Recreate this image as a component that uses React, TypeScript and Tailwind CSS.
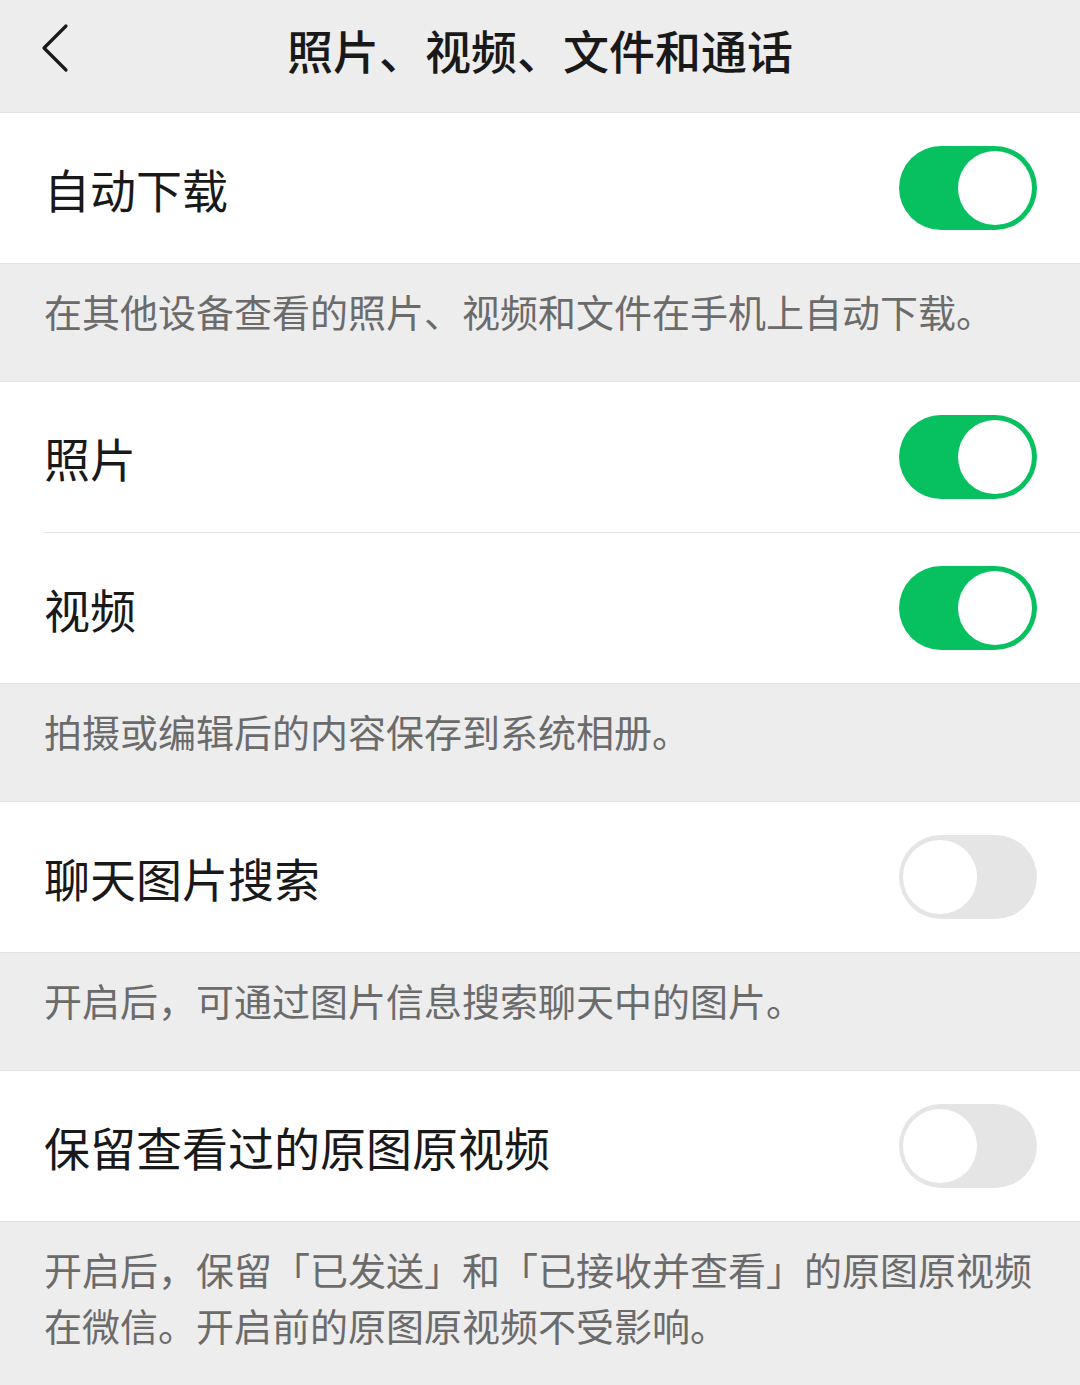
import { useState } from "react";

const font = { fontFamily: '"Noto Sans CJK SC", "Noto Sans", sans-serif' };

function Toggle({ on, onChange }: { on: boolean; onChange: () => void }) {
  return (
    <button
      onClick={onChange}
      className={`relative h-[84px] w-[138px] shrink-0 rounded-full transition-colors ${
        on ? "bg-[#07c160]" : "bg-[#e5e5e5]"
      }`}
    >
      <span
        className={`absolute top-[5px] h-[74px] w-[74px] rounded-full bg-white transition-all ${
          on ? "left-[59px]" : "left-[4px]"
        }`}
      />
    </button>
  );
}

function Row({
  label,
  on,
  onChange,
  divider,
}: {
  label: string;
  on: boolean;
  onChange: () => void;
  divider?: boolean;
}) {
  return (
    <div className="bg-white pl-[44px]">
      <div
        className={`flex items-center justify-between pr-[43px] ${
          divider ? "h-[151px] border-b border-[#e5e5e5]" : "h-[150px]"
        }`}
      >
        <span className="text-[46px] leading-none text-[#191919]">{label}</span>
        <Toggle on={on} onChange={onChange} />
      </div>
    </div>
  );
}

function Desc({ children }: { children: React.ReactNode }) {
  return (
    <div className="border-y border-[#e3e3e3] bg-[#ededed] px-[44px] pt-[19px] pb-[42px] text-[38px] leading-[56px] text-[#6b6b6b]">
      {children}
    </div>
  );
}

export default function App() {
  const [s, setS] = useState({ auto: true, photo: true, video: true, search: false, keep: false });
  const flip = (k: keyof typeof s) => setS((p) => ({ ...p, [k]: !p[k] }));

  return (
    <div className="min-h-[1385px] w-[1080px] bg-[#ededed]" style={font}>
      {/* Nav bar */}
      <div className="relative flex h-[113px] items-start justify-center border-b border-[#e3e3e3] bg-[#ededed] pt-[26px]">
        <button className="absolute left-[36px] top-[19px] p-1">
          <svg width="32" height="50" viewBox="0 0 32 50" fill="none">
            <path d="M26 3 L4 25 L26 47" stroke="#191919" strokeWidth="3.2" strokeLinecap="round" strokeLinejoin="round" />
          </svg>
        </button>
        <h1 className="text-[46px] font-medium leading-none text-[#191919]">照片、视频、文件和通话</h1>
      </div>

      <Row label="自动下载" on={s.auto} onChange={() => flip("auto")} />
      <Desc>在其他设备查看的照片、视频和文件在手机上自动下载。</Desc>

      <Row label="照片" on={s.photo} onChange={() => flip("photo")} divider />
      <Row label="视频" on={s.video} onChange={() => flip("video")} />
      <Desc>拍摄或编辑后的内容保存到系统相册。</Desc>

      <Row label="聊天图片搜索" on={s.search} onChange={() => flip("search")} />
      <Desc>开启后，可通过图片信息搜索聊天中的图片。</Desc>

      <Row label="保留查看过的原图原视频" on={s.keep} onChange={() => flip("keep")} />
      <Desc>开启后，保留「已发送」和「已接收并查看」的原图原视频在微信。开启前的原图原视频不受影响。</Desc>
    </div>
  );
}
